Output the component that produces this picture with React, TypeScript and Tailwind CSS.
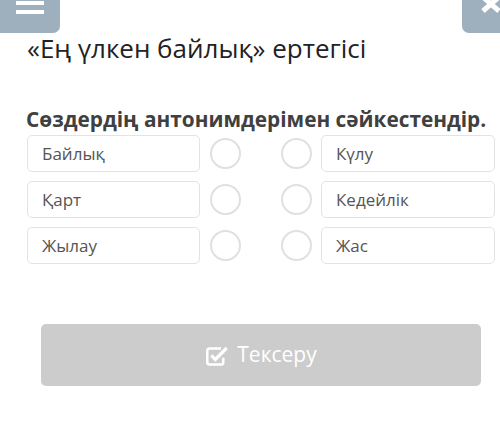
import React from "react";

const left = ["Байлық", "Қарт", "Жылау"];
const right = ["Күлу", "Кедейлік", "Жас"];

function Circle() {
  return <div className="w-[31px] h-[31px] rounded-full border-2 border-[#e0e0e0] bg-white" />;
}

export default function App() {
  return (
    <div
      className="w-[500px] h-[421px] bg-white overflow-hidden flex flex-col"
      style={{ fontFamily: '"Open Sans", "Noto Sans", sans-serif' }}
    >
      <div className="flex justify-between h-[33px]">
        <div className="w-[60px] h-[33px] bg-[#9eb0be] rounded-br-[7px] flex flex-col items-center">
          <div className="w-[28px] h-[4px] bg-white mt-[1px]" />
          <div className="w-[28px] h-[4px] bg-white mt-[5px]" />
        </div>
        <div className="w-[38px] h-[33px] bg-[#9eb0be] rounded-bl-[7px] relative overflow-hidden">
          <svg className="absolute left-[18px] top-[-6px]" width="22" height="20" viewBox="0 0 22 20">
            <path d="M3 3 L19 17 M19 3 L3 17" stroke="white" strokeWidth="5" />
          </svg>
        </div>
      </div>
      <div className="ml-[27px] text-[26px] leading-[30px] text-[#222] whitespace-nowrap">
        «Ең үлкен байлық» ертегісі
      </div>
      <div className="ml-[26px] mt-[43px] text-[20.8px] leading-[27px] font-bold text-[#404040] whitespace-nowrap">
        Сөздердің антонимдерімен сәйкестендір.
      </div>
      <div className="mt-[2px] ml-[27px] flex flex-col gap-[9px]">
        {left.map((l, i) => (
          <div key={i} className="flex items-center h-[37px]">
            <div className="w-[173px] h-[37px] border border-[#e3e3e3] rounded-[5px] flex items-center pl-[14px] text-[17px] text-[#555]">
              {l}
            </div>
            <div className="ml-[10px]">
              <Circle />
            </div>
            <div className="ml-[40px]">
              <Circle />
            </div>
            <div className="ml-[9px] w-[174px] h-[37px] border border-[#e3e3e3] rounded-[5px] flex items-center pl-[14px] text-[17px] text-[#555]">
              {right[i]}
            </div>
          </div>
        ))}
      </div>
      <div className="ml-[41px] mt-[60px] w-[440px] h-[62px] bg-[#cccccc] rounded-[5px] flex items-center justify-center gap-[8px] text-white text-[21px]">
        <svg width="24" height="22" viewBox="0 0 21 19" className="mt-[1px]">
          <path
            d="M14 3 H4 Q2 3 2 5 V15 Q2 17 4 17 H14 Q16 17 16 15 V11"
            fill="none"
            stroke="white"
            strokeWidth="2.2"
          />
          <path d="M5.5 9 L9 12.5 L19 2.5" fill="none" stroke="white" strokeWidth="2.8" />
        </svg>
        <span>Тексеру</span>
      </div>
    </div>
  );
}
